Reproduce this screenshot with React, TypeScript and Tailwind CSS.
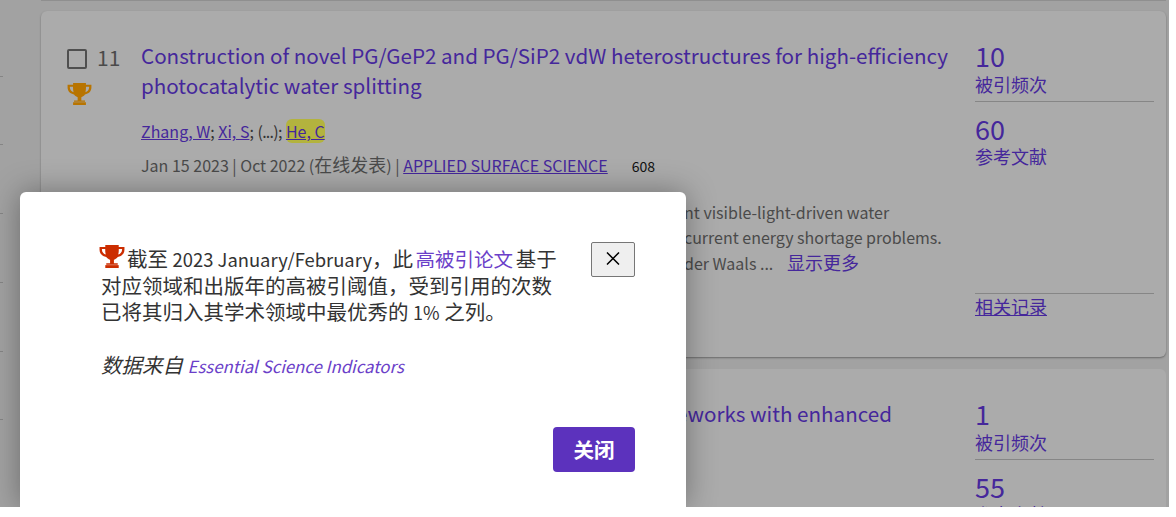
const sans = "font-['Noto_Sans_CJK_SC','Noto_Sans',sans-serif]";

function TrophyIcon({ className }: { className: string }) {
  return (
    <svg viewBox="0 0 26 24" className={className} fill="currentColor">
      <path d="M6 0h14v2h6v3c0 4-3 7-7 7.500-1 1.500-3 2.500-4 3V19h4v1.500H7V19h4v-3.500c-1-.5-3-1.500-4-3C3 12 0 9 0 5V2h6V0zM2.500 4.200V5c0 2.500 1.800 4.500 4 5-.5-1.700-.6-3.800-.6-5.800H2.500zm21 0h-3.400c0 2-.1 4.100-.6 5.800 2.200-.5 4-2.500 4-5v-.8z" />
      <rect x="6" y="21" width="14" height="3" />
    </svg>
  );
}

function StatColumn({ cited, refs, related }: { cited: string; refs: string; related?: boolean }) {
  return (
    <div className="w-[179px] pt-[1px] text-[#45279b]">
      <div className="text-[27px] leading-[30px]">{cited}</div>
      <div className="mt-[1px] text-[18px] leading-[24px]">被引频次</div>
      <div className="border-t border-[#868686] mt-[5px] pt-[12px]">
        <div className="text-[27px] leading-[30px]">{refs}</div>
        <div className="text-[18px] leading-[24px]">参考文献</div>
      </div>
      {related && (
        <div className="border-t border-[#868686] mt-[125px] text-[18px] leading-[24px] underline">相关记录</div>
      )}
    </div>
  );
}

function FirstCard() {
  return (
    <div className="flex h-[346px] shrink-0 rounded-md bg-[#ababab] shadow-[0_1px_2px_rgba(0,0,0,0.35)] pt-[29px] pl-[26px] pr-[12px]">
      <div className="w-[74px] shrink-0">
        <div className="flex items-center gap-[10px] h-[28px] mt-[5px]">
          <div className="w-[20px] h-[20px] border-2 border-[#4f4f4f] rounded-[2px]" />
          <span className="-mt-[3px] text-[21px] text-[#4a4a4a]">11</span>
        </div>
        <TrophyIcon className="mt-[10px] w-[25px] h-[22px] text-[#b87400]" />
      </div>
      <div className="w-[834px] shrink-0">
        <div className="text-[20.600px] leading-[30px] text-[#45279b]">
          Construction of novel PG/GeP2 and PG/SiP2 vdW heterostructures for high-efficiency photocatalytic water splitting
        </div>
        <div className="mt-[19px] text-[16px] leading-[24px] text-[#333]">
          <span className="underline text-[#45279b]">Zhang, W</span>; <span className="underline text-[#45279b]">Xi, S</span>; <span className="tracking-[-0.750px]">(...)</span>; <span className="underline text-[#45279b] bg-[#b3b33e] rounded-[6px]">He, C</span>
        </div>
        <div className="mt-[9px] text-[16px] leading-[24px] text-[#4a4a4a]">
          Jan 15 2023 | Oct 2022 (<span className="text-[18px]">在线发表</span>) | <span className="underline text-[#45279b]">APPLIED SURFACE SCIENCE</span>
          <span className="ml-[24px] text-[14px] text-[#111]">608</span>
        </div>
        <div className="mt-[22px] pl-[543px] text-[16px] leading-[25px] text-[#4a4a4a] whitespace-nowrap">
          <div>nt visible-light-driven water</div>
          <div>current energy shortage problems.</div>
          <div>der Waals ... <span className="ml-[10px] text-[18px] text-[#45279b]">显示更多</span></div>
        </div>
      </div>
      <StatColumn cited="10" refs="60" related />
    </div>
  );
}

function SecondCard() {
  return (
    <div className="flex flex-1 mt-[12px] rounded-t-md bg-[#ababab] pt-[29px] pl-[100px] pr-[12px]">
      <div className="w-[834px] shrink-0 text-[20.600px] leading-[30px] text-[#45279b] pl-[535px] whitespace-nowrap">
        eworks with enhanced
      </div>
      <StatColumn cited="1" refs="55" />
    </div>
  );
}

export default function App() {
  return (
    <div className={`${sans} w-[1176px] h-[517px] overflow-hidden bg-white`}>
      <div className="relative w-[1169px] h-[507px] overflow-hidden bg-[#a2a2a2] pr-[3px] pl-[41px] flex flex-col">
        <div className="h-px shrink-0 mb-[10px] bg-[#8f8f8f]" />
        <FirstCard />
        <SecondCard />

        {[76, 144, 213, 282, 351, 419].map((y) => (
          <div key={y} className="absolute left-0 w-[3px] h-px bg-[#858585]" style={{ top: y }} />
        ))}

        <div className="absolute left-[20px] top-[192px] w-[666px] h-[315px] bg-white rounded-t-md shadow-[0_0_30px_rgba(0,0,0,0.35)] text-[#333]">
          <div className="flex pt-[50px] pl-[81px] pr-[51px]">
            <div className="mt-[3px] text-[20.500px] leading-[26px] whitespace-nowrap">
              <p>
                <TrophyIcon className="inline-block align-[-1px] -ml-[2px] mr-[2px] w-[26px] h-[23px] text-[#cc2d00]" />截至 <span className="text-[18.400px]">2023 January/February</span>，此 <span className="-ml-[2px] -mr-[2px] text-[19.500px] text-[#6b3fc9]">高被引论文</span> 基于
              </p>
              <p>对应领域和出版年的高被引阈值，受到引用的次数</p>
              <p>已将其归入其学术领域中最优秀的 <span className="text-[18px]">1%</span> 之列。</p>
              <p className="mt-[26px] italic">
                数据来自 <span className="text-[16.800px] text-[#6b3fc9]">Essential Science Indicators</span>
              </p>
            </div>
            <button className="ml-auto w-[44px] h-[35px] flex items-center justify-center bg-[#efefef] border border-[#767676] rounded-[2px] text-black">
              <svg viewBox="0 0 14 13" className="w-[14px] h-[13px] -mt-[2px]" stroke="currentColor" strokeWidth="1.500" fill="none"><path d="M1 .5l12 12M13 .5l-12 12" /></svg>
            </button>
          </div>
          <div className="flex justify-end pr-[51px] mt-[48px]">
            <button className="w-[82px] h-[45px] rounded-[4px] bg-[#5c32bd] text-white font-bold text-[20.500px]">关闭</button>
          </div>
        </div>
      </div>
    </div>
  );
}
